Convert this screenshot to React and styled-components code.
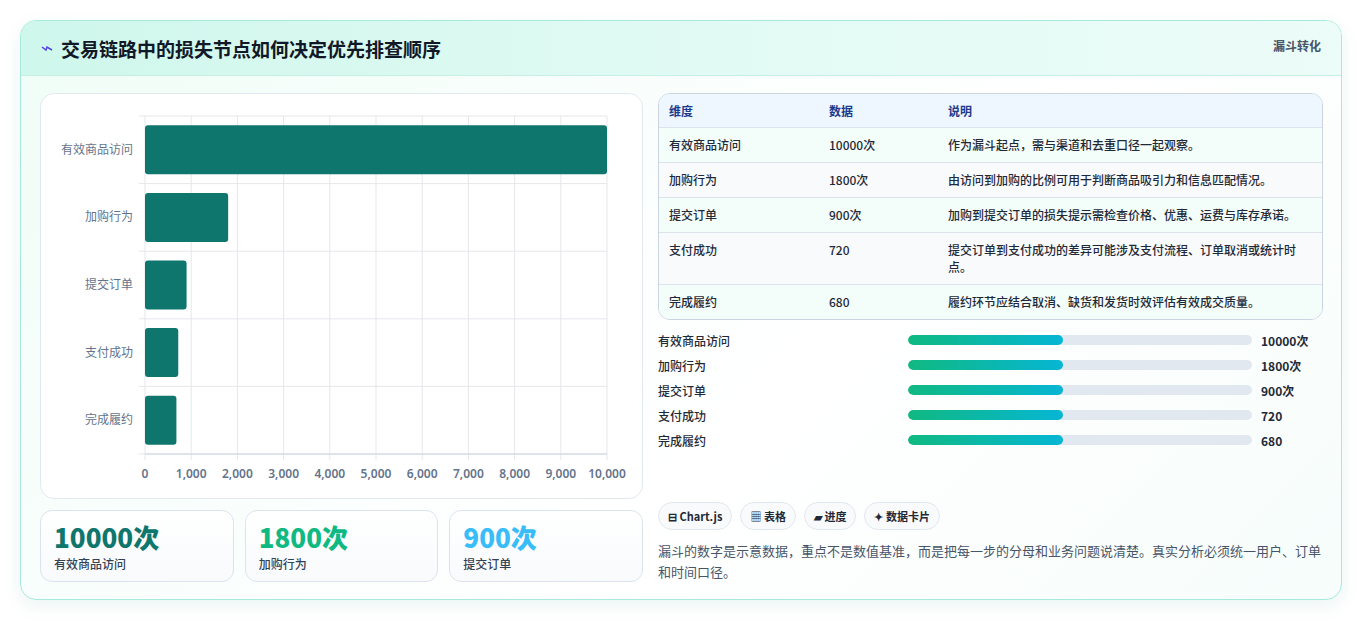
import React from 'react';
import styled, { createGlobalStyle } from 'styled-components';

const GlobalStyle = createGlobalStyle`
  html, body { margin: 0; padding: 0; background: #f3f4f6; }
  body { font-family: "Noto Sans CJK SC", "Noto Sans", sans-serif; }
`;

const Page = styled.div`
  width: 1363px;
  height: 621px;
  box-sizing: border-box;
  padding: 20px 21px 23px 20px;
  background: #fff;
`;

const Card = styled.div`
  height: 100%;
  border: 1px solid #a7eadb;
  border-radius: 16px;
  overflow: hidden;
  background: linear-gradient(135deg, #f0fdf7 0%, #ffffff 60%, #f6fdfb 100%);
  box-shadow: 0 6px 18px rgba(15, 118, 110, 0.08);
  display: flex;
  flex-direction: column;
`;

const Header = styled.div`
  height: 54px;
  flex: none;
  background: linear-gradient(90deg, #cff7ec, #e4fbf5 60%, #ecfcf8);
  border-bottom: 1px solid #c6efe4;
  display: flex;
  align-items: center;
  justify-content: space-between;
  padding: 0 20px;
  position: relative;
`;

const Title = styled.h1`
  margin: 0;
  font-size: 19px;
  font-weight: 700;
  color: #111827;
  display: flex;
  align-items: center;
  gap: 8px;
`;

const Tag = styled.span`
  position: absolute;
  right: 20px;
  top: 16px;
  font-size: 12px;
  font-weight: 700;
  color: #475569;
`;

const Body = styled.div`
  flex: 1;
  display: grid;
  grid-template-columns: 603px 1fr;
  gap: 15px;
  padding: 17px 18px 18px 19px;
`;

const Col = styled.div`
  display: flex;
  flex-direction: column;
  gap: ${p => (p.$tight ? '0' : '11px')};
`;

const ChartBox = styled.div`
  height: 404px;
  background: #fff;
  border: 1px solid #e2e8f0;
  border-radius: 14px;
`;

const Stats = styled.div`
  display: grid;
  grid-template-columns: repeat(3, 1fr);
  gap: 11px;
`;

const Stat = styled.div`
  height: 72px;
  box-sizing: border-box;
  border: 1px solid #dbe4ee;
  border-radius: 12px;
  background: linear-gradient(180deg, #ffffff, #f8fafc);
  padding: 8px 13px;
`;

const StatValue = styled.div`
  font-size: 26px;
  font-weight: 800;
  line-height: 36px;
  color: ${p => p.$color};
`;

const StatLabel = styled.div`
  font-size: 12px;
  color: #334155;
  font-weight: 500;
`;

const Table = styled.div`
  border: 1px solid #cbd5e1;
  border-radius: 12px;
  overflow: hidden;
  background: #fff;
`;

const Row = styled.div`
  display: grid;
  grid-template-columns: 160px 119px 1fr;
  padding: ${p => (p.$head ? '8px 10px' : '8px 10px 9px')};
  font-size: 12px;
  line-height: 17px;
  font-weight: ${p => (p.$head ? 700 : 500)};
  color: ${p => (p.$head ? '#1e3a8a' : '#1f2937')};
  background: ${p => (p.$head ? '#eef6ff' : p.$alt ? '#f8fafc' : '#f3fdf9')};
  border-bottom: 1px solid #dde3ea;
  &:last-child { border-bottom: none; }
`;

const Bars = styled.div`
  margin-top: 11px;
  display: flex;
  flex-direction: column;
  gap: 7px;
`;

const BarRow = styled.div`
  display: grid;
  grid-template-columns: 250px 344px 1fr;
  align-items: center;
  font-size: 12px;
  font-weight: 500;
  color: #1f2937;
  height: 18px;
`;

const Track = styled.div`
  height: 10px;
  border-radius: 5px;
  background: #e2e8f0;
  overflow: hidden;
`;

const Fill = styled.div`
  height: 100%;
  border-radius: 5px;
  background: linear-gradient(90deg, #10b981, #06b6d4);
`;

const BarVal = styled.span`
  padding-left: 9px;
  font-weight: 700;
`;

const Chips = styled.div`
  margin-top: auto;
  display: flex;
  gap: 8px;
`;

const Chip = styled.span`
  height: 28px;
  box-sizing: border-box;
  padding: 0 9px;
  border: 1px solid #e2e8f0;
  border-radius: 14px;
  background: #f8fafc;
  display: inline-flex;
  align-items: center;
  gap: 4px;
  font-size: 11px;
  font-weight: 600;
  color: #1f2937;
`;

const Note = styled.p`
  margin: 10px 0 0;
  font-size: 13px;
  line-height: 21px;
  color: #475569;
`;

const data = [
  ['有效商品访问', 10000, '10000次', '作为漏斗起点，需与渠道和去重口径一起观察。'],
  ['加购行为', 1800, '1800次', '由访问到加购的比例可用于判断商品吸引力和信息匹配情况。'],
  ['提交订单', 900, '900次', '加购到提交订单的损失提示需检查价格、优惠、运费与库存承诺。'],
  ['支付成功', 720, '720', '提交订单到支付成功的差异可能涉及支付流程、订单取消或统计时点。'],
  ['完成履约', 680, '680', '履约环节应结合取消、缺货和发货时效评估有效成交质量。'],
];

function Chart() {
  const x0 = 104, x1 = 566, y0 = 22, y1 = 360;
  const rowH = (y1 - y0) / 5;
  const ticks = Array.from({ length: 11 }, (_, i) => i * 1000);
  return (
    <svg width="601" height="402">
      {ticks.map(t => {
        const x = x0 + (t / 10000) * (x1 - x0);
        return (
          <g key={t}>
            <line x1={x} y1={y0} x2={x} y2={y1 + 6} stroke="#e5e7eb" />
            <text x={x} y={384} fontSize="12" fontWeight="600" fill="#64748b" textAnchor="middle" fontFamily="Noto Sans, sans-serif">
              {t.toLocaleString('en-US')}
            </text>
          </g>
        );
      })}
      {[0, 1, 2, 3, 4, 5].map(i => (
        <line key={i} x1={x0 - 6} x2={x1} y1={y0 + i * rowH} y2={y0 + i * rowH} stroke="#e5e7eb" />
      ))}
      <line x1={x0} x2={x1} y1={y1} y2={y1} stroke="#cbd5e1" />
      {data.map(([name, v], i) => {
        const cy = y0 + i * rowH + rowH / 2;
        const w = (v / 10000) * (x1 - x0);
        return (
          <g key={name}>
            <text x={x0 - 12} y={cy + 4} fontSize="12" fill="#64748b" textAnchor="end" fontFamily="Noto Sans CJK SC, sans-serif">{name}</text>
            <rect x={x0} y={cy - 24.5} width={w} height={49} rx="3" fill="#0f766e" />
          </g>
        );
      })}
    </svg>
  );
}

export default function App() {
  return (
    <>
      <GlobalStyle />
      <Page>
        <Card>
          <Header>
            <Title>
              <svg width="12" height="12" viewBox="0 0 12 12">
                <path d="M1 5 L5 8 L6 5 L11 8" stroke="#4f46e5" strokeWidth="1.5" fill="none" />
              </svg>
              交易链路中的损失节点如何决定优先排查顺序
            </Title>
            <Tag>漏斗转化</Tag>
          </Header>
          <Body>
            <Col>
              <ChartBox><Chart /></ChartBox>
              <Stats>
                <Stat><StatValue $color="#0f766e">10000次</StatValue><StatLabel>有效商品访问</StatLabel></Stat>
                <Stat><StatValue $color="#10b981">1800次</StatValue><StatLabel>加购行为</StatLabel></Stat>
                <Stat><StatValue $color="#38bdf8">900次</StatValue><StatLabel>提交订单</StatLabel></Stat>
              </Stats>
            </Col>
            <Col $tight>
              <Table>
                <Row $head><span>维度</span><span>数据</span><span>说明</span></Row>
                {data.map(([n, , s, d], i) => (
                  <Row key={n} $alt={i % 2 === 1}><span>{n}</span><span>{s}</span><span>{d}</span></Row>
                ))}
              </Table>
              <Bars>
                {data.map(([n, , s]) => (
                  <BarRow key={n}>
                    <span>{n}</span>
                    <Track><Fill style={{ width: '45%' }} /></Track>
                    <BarVal>{s}</BarVal>
                  </BarRow>
                ))}
              </Bars>
              <Chips>
                <Chip>⊟ Chart.js</Chip>
                <Chip>▦ 表格</Chip>
                <Chip>▰ 进度</Chip>
                <Chip>✦ 数据卡片</Chip>
              </Chips>
              <Note>漏斗的数字是示意数据，重点不是数值基准，而是把每一步的分母和业务问题说清楚。真实分析必须统一用户、订单和时间口径。</Note>
            </Col>
          </Body>
        </Card>
      </Page>
    </>
  );
}
